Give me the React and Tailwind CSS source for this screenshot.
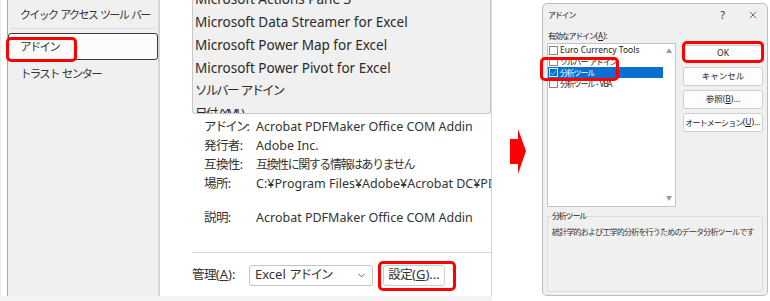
import { ChevronDown, X, Check } from 'lucide-react';

const font = { fontFamily: '"Noto Sans", "Noto Sans CJK JP", sans-serif' };

// Japanese glyphs in the reference are set in a narrow UI font, so tighten them
function J({ children, className = '', kanji = false }) {
  return (
    <span className={`${kanji ? 'tracking-[-0.05em]' : 'tracking-[-0.15em]'} [word-spacing:0.15em] ${className}`}>
      {children}
    </span>
  );
}

const addins = [
  { t: 'Microsoft Actions Pane 3' },
  { t: 'Microsoft Data Streamer for Excel' },
  { t: 'Microsoft Power Map for Excel' },
  { t: 'Microsoft Power Pivot for Excel' },
  { t: 'ソルバー アドイン', jp: true },
  { t: '日付 (XML)', jp: true },
];

function RedBox({ className }) {
  return <div className={`absolute border-[3px] border-[#ff0000] rounded-[5px] pointer-events-none ${className}`} />;
}

function Row({ label, kanji, children, className = '' }) {
  return (
    <div className={`h-[19px] flex items-center whitespace-nowrap ${className}`}>
      <span className="w-[52px] shrink-0 text-[12.5px]"><J kanji={kanji}>{label}</J></span>
      <span>{children}</span>
    </div>
  );
}

function OptionsPane() {
  return (
    <div className="relative w-[492px] h-[301px] shrink-0 bg-[#f3f3f3] text-[#333]">
      <div className="flex h-[296px] bg-white border-r border-[#d6d6d6] overflow-hidden">
        <div className="w-[7px] shrink-0 border-l border-[#ececec]" />

        {/* sidebar */}
        <div className="w-[153px] shrink-0 bg-[#f0f0f0] border-l border-[#a8a8a8] border-r-2 border-r-[#d4d4d4] flex flex-col text-[11px] whitespace-nowrap">
          <div className="h-[28px] flex items-center pl-[12px] pt-[2px]"><J>クイック アクセス ツール バー</J></div>
          <div className="mx-[3px] border-t border-[#dcdcdc]" />
          <div className="mt-[4px] h-[27px] border border-[#3a3a3a] rounded-[3px] bg-[#fbfbfb] flex items-center pl-[11px] text-[11.5px]"><J>アドイン</J></div>
          <div className="h-[28px] flex items-center pl-[12px] text-[11.5px]"><J>トラスト センター</J></div>
        </div>

        {/* main */}
        <div className="w-[331px] shrink-0 flex flex-col pl-[32px] overflow-hidden">
          <div className="h-[114px] shrink-0 overflow-hidden bg-[#f0f0f0] border border-t-0 border-[#c9c9c9] rounded-b-[3px] pl-[2px] text-[13.5px] text-[#2a2a2a]">
            <div className="-mt-[12px]">
              {addins.map((a) => (
                <div key={a.t} className="h-[23px] flex items-center whitespace-nowrap">
                  {a.jp ? <J className="text-[12.5px]">{a.t}</J> : a.t}
                </div>
              ))}
            </div>
          </div>

          <div className="pl-[12px] pt-[4px] text-[12.5px] text-[#333]">
            <Row label="アドイン:">Acrobat PDFMaker Office COM Addin</Row>
            <Row label="発行者:" kanji>Adobe Inc.</Row>
            <Row label="互換性:" kanji><span className="text-[12px] tracking-[-0.12em]">互換性に関する情報はありません</span></Row>
            <Row label="場所:" kanji>C:¥Program Files¥Adobe¥Acrobat DC¥PDFMaker¥Office¥x64</Row>
            <Row label="説明:" kanji className="mt-[15px]">Acrobat PDFMaker Office COM Addin</Row>
          </div>

          <div className="mt-[24px] border-t border-[#dadada]" />

          <div className="relative flex items-center h-[20px] mt-[12px] text-[13px] text-[#333] whitespace-nowrap">
            <span className="w-[57px] shrink-0"><J kanji className="text-[12.5px]">管理</J>(<u>A</u>):</span>
            <div className="w-[124px] shrink-0 h-[21px] border border-[#c4c4c4] rounded-[3px] bg-white flex items-center justify-between px-[5px]">
              <span>Excel <J className="text-[12.5px]">アドイン</J></span>
              <ChevronDown size={11} strokeWidth={2} className="text-[#555]" />
            </div>
            <div className="ml-[10px] w-[62px] shrink-0 h-[21px] border border-[#cdcdcd] rounded-[3px] bg-[#fdfdfd] flex items-center justify-center">
              <J kanji className="text-[12.5px]">設定</J>(<u>G</u>)...
            </div>
            <RedBox className="left-[186px] -top-[4px] w-[78px] h-[30px]" />
          </div>
        </div>
      </div>

      <RedBox className="left-[6px] top-[37px] w-[71px] h-[25px]" />
    </div>
  );
}

function Arrow() {
  return (
    <div className="w-[50px] shrink-0 flex items-center justify-center pt-[2px]">
      <svg width="16" height="46" viewBox="0 0 16 46" className="ml-[2px]">
        <path d="M0 10 H8 V0 L16 22 L8 45 V35 H0 Z" fill="#ff0000" />
      </svg>
    </div>
  );
}

function Btn({ children }) {
  return (
    <div className="h-[19px] border border-[#cfcfcf] rounded-[3px] bg-[#fdfdfd] flex items-center justify-center text-[8.5px] text-[#222] whitespace-nowrap">
      {children}
    </div>
  );
}

function AddinDialog() {
  const items = [
    { label: 'Euro Currency Tools', latin: true },
    { label: 'ソルバー アドイン' },
    { label: '分析ツール', checked: true, selected: true },
    { label: '分析ツール - VBA' },
  ];
  return (
    <div className="relative mt-[3px] w-[226px] h-[293px] shrink-0 bg-[#f0f0f0] border border-[#bdbdbd] rounded-[5px] flex flex-col text-[8px] text-[#222] whitespace-nowrap">
      <div className="h-[22px] flex items-center justify-between pl-[5px] pr-[8px]">
        <J>アドイン</J>
        <div className="flex items-center gap-[22px] text-[11px] text-[#333]">
          <span>?</span>
          <X size={12} strokeWidth={1.4} />
        </div>
      </div>

      <div className="flex px-[4px] mt-[2px]">
        <div className="w-[129px] shrink-0">
          <div className="h-[15px] flex items-center pl-[1px]"><J>有効なアドイン</J>(<u>A</u>):</div>
          <div className="h-[164px] bg-white border border-[#c4c4c4] flex">
            <div className="flex-1 pt-[1px]">
              {items.map((it) => (
                <div
                  key={it.label}
                  className={`h-[11px] flex items-center gap-[2px] pl-[1px] ${it.selected ? 'bg-[#0a6fd1] text-white' : ''}`}
                >
                  <span className={`w-[9px] h-[9px] shrink-0 border ${it.selected ? 'border-[#dfe9f5]' : 'border-[#888] bg-white'} flex items-center justify-center`}>
                    {it.checked && <Check size={8} strokeWidth={2} className="text-white" />}
                  </span>
                  {it.latin ? <span className="text-[8.5px]">{it.label}</span> : <J>{it.label}</J>}
                </div>
              ))}
            </div>
            <div className="w-[12px] flex flex-col justify-between items-center py-[3px] text-[6px] text-[#999]">
              <span>▲</span>
              <span>▼</span>
            </div>
          </div>
        </div>

        <div className="ml-[7px] w-[80px] shrink-0 pt-[17px] flex flex-col gap-[4px]">
          <div className="h-[17px] border border-[#cfcfcf] rounded-[3px] bg-white flex items-center justify-center text-[8.5px]">OK</div>
          <div className="mt-[1px]"><Btn><span>キャンセル</span></Btn></div>
          <Btn><span>参照</span>(<u>B</u>)...</Btn>
          <Btn><span className="text-[8px] tracking-[-0.1em]">オートメーション</span>(<u>U</u>)...</Btn>
        </div>
      </div>

      <div className="mx-[4px] mt-[9px] h-[76px] border border-[#dcdcdc] rounded-[2px] px-[4px]">
        <div className="-mt-[7px] bg-[#f0f0f0] w-fit pr-[2px]"><J>分析ツール</J></div>
        <div className="mt-[4px] text-[8px] text-[#333] tracking-[-0.1em]">統計学的および工学的分析を行うためのデータ分析ツールです</div>
      </div>

      <RedBox className="left-[-3px] top-[53px] w-[79px] h-[24px]" />
      <RedBox className="left-[139px] top-[37px] w-[82px] h-[22px]" />
    </div>
  );
}

export default function App() {
  return (
    <div className="w-[770px] h-[301px] bg-white flex overflow-hidden" style={font}>
      <OptionsPane />
      <Arrow />
      <AddinDialog />
    </div>
  );
}
